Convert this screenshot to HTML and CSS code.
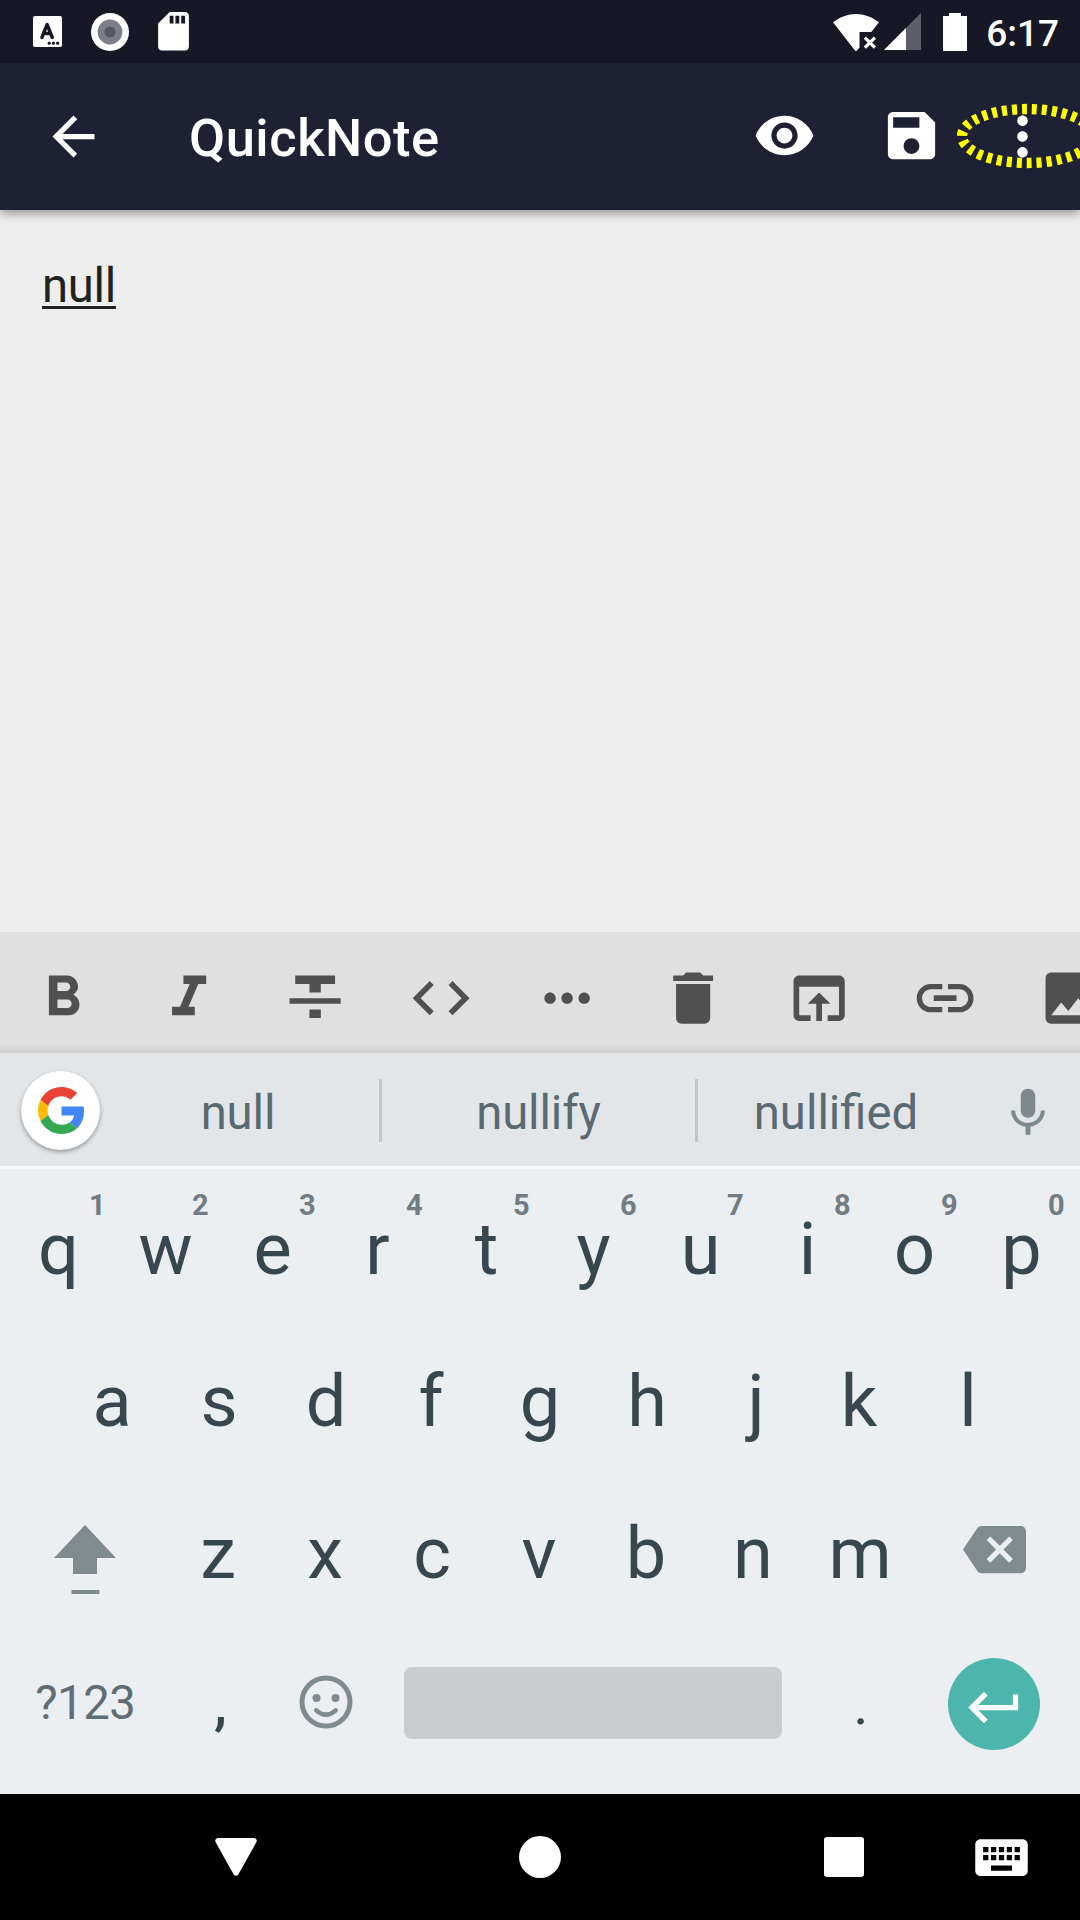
FILE: index.html
```html
<!DOCTYPE html>
<html lang="en">
<head>
<meta charset="utf-8">
<title>QuickNote</title>
<link rel="stylesheet" href="styles.css">
</head>
<body>
<div class="screen">
  <header class="status">
    <div class="status-left">
      <svg width="29" height="31" viewBox="0 0 29 31"><rect width="29" height="31" rx="2" fill="#fff"/><path d="M8.9 21.5 14.1 8.5 19.3 21.5M11 17.5h6.4" fill="none" stroke="#171826" stroke-width="3.4" stroke-linecap="round" stroke-linejoin="round"/><g fill="#171826"><circle cx="16.2" cy="27.2" r="1.6"/><circle cx="20.4" cy="27.2" r="1.6"/><circle cx="24.6" cy="27.2" r="1.6"/></g></svg>
      <svg width="38" height="38" viewBox="0 0 38 38"><circle cx="19" cy="19" r="19" fill="#fff"/><circle cx="19" cy="19" r="12.4" fill="#7b7d88"/><circle cx="19" cy="19" r="5.6" fill="#555662"/></svg>
      <svg width="31" height="38.5" viewBox="4 2 16 20"><path fill="#fff" d="M18 2h-8L4 8v12c0 1.1.9 2 2 2h12c1.1 0 2-.9 2-2V4c0-1.1-.9-2-2-2zm-6 6h-2V4h2v4zm3 0h-2V4h2v4zm3 0h-2V4h2v4z"/></svg>
    </div>
    <div class="status-right">
      <svg width="89" height="38" viewBox="833 12 89 38"><path fill="#fff" d="M833 21.3C840 16 848 13 856 13s16 3 23 8.300L871.300 31H859.500V46.500L857 49.500Q856 50.500 855 49.500Z"/><path d="m864.900 36.700 10 10m0-10-10 10" stroke="#fff" stroke-width="3.200"/><path fill="#5d5e69" d="M921 12v37h-37z"/><path fill="#fff" d="M906 27v22h-22z"/></svg>
      <svg class="battery" width="24" height="38" viewBox="0 0 24 38"><path fill="#fff" d="M6 0h12v3h6v35H0V3h6z"/></svg>
      <span class="clock">6:17</span>
    </div>
  </header>

  <div class="appbar">
    <svg class="icon back" viewBox="0 0 24 24"><path d="M20 11H7.830l5.590-5.590L12 4l-8 8 8 8 1.410-1.410L7.830 13H20v-2z"/></svg>
    <h1 class="title">QuickNote</h1>
    <div class="actions">
      <svg class="icon view" viewBox="0 0 24 24"><path d="M12 4.500C7 4.500 2.730 7.610 1 12c1.730 4.390 6 7.500 11 7.500s9.270-3.110 11-7.500c-1.730-4.390-6-7.500-11-7.500zM12 17c-2.760 0-5-2.240-5-5s2.240-5 5-5 5 2.240 5 5-2.240 5-5 5zm0-8c-1.660 0-3 1.340-3 3s1.340 3 3 3 3-1.340 3-3-1.340-3-3-3z"/></svg>
      <svg class="icon save" viewBox="0 0 24 24"><path d="M17 3H5c-1.110 0-2 .9-2 2v14c0 1.100.89 2 2 2h14c1.100 0 2-.9 2-2V7l-4-4zm-5 16c-1.660 0-3-1.340-3-3s1.340-3 3-3 3 1.340 3 3-1.340 3-3 3zm3-10H5V5h10v4z"/></svg>
      <div class="more">
        <svg class="icon" viewBox="0 0 24 24"><path d="M12 8c1.100 0 2-.9 2-2s-.9-2-2-2-2 .9-2 2 .9 2 2 2zm0 2c-1.100 0-2 .9-2 2s.9 2 2 2 2-.9 2-2-.9-2-2-2zm0 6c-1.100 0-2 .9-2 2s.9 2 2 2 2-.9 2-2-.9-2-2-2z"/></svg>
        <svg class="marker" width="123" height="66" viewBox="957 103 123 66"><ellipse cx="1027.500" cy="136" rx="65.500" ry="27" fill="none" stroke="#ff0" stroke-width="10.300" stroke-dasharray="5 5" stroke-dashoffset="-1.500"/></svg>
      </div>
    </div>
  </div>

  <main class="editor"><u class="note">null</u></main>

  <div class="tools">
    <svg viewBox="0 0 24 24"><path d="M15.600 10.790c.97-.67 1.650-1.770 1.650-2.790 0-2.260-1.750-4-4-4H7v14h7.040c2.090 0 3.710-1.700 3.710-3.790 0-1.520-.86-2.820-2.150-3.420zM10 6.500h3c.83 0 1.500.67 1.500 1.500s-.67 1.500-1.500 1.500h-3v-3zm3.500 9H10v-3h3.500c.83 0 1.500.67 1.500 1.500s-.67 1.500-1.500 1.500z"/></svg>
    <svg viewBox="0 0 24 24"><path d="M10 4v3h2.210l-3.420 8H6v3h8v-3h-2.210l3.420-8H18V4z"/></svg>
    <svg viewBox="0 0 24 24"><path d="M10 19h4v-3h-4v3zM5 4v3h5v3h4V7h5V4H5zM3 14h18v-2H3v2z"/></svg>
    <svg viewBox="0 0 24 24"><path d="M9.400 16.600 4.800 12l4.600-4.600L8 6l-6 6 6 6 1.400-1.400zm5.200 0 4.600-4.600-4.600-4.600L16 6l6 6-6 6-1.400-1.400z"/></svg>
    <svg viewBox="0 0 24 24"><path d="M6 10c-1.100 0-2 .9-2 2s.9 2 2 2 2-.9 2-2-.9-2-2-2zm12 0c-1.100 0-2 .9-2 2s.9 2 2 2 2-.9 2-2-.9-2-2-2zm-6 0c-1.100 0-2 .9-2 2s.9 2 2 2 2-.9 2-2-.9-2-2-2z"/></svg>
    <svg viewBox="0 0 24 24"><path d="M6 19c0 1.100.9 2 2 2h8c1.100 0 2-.9 2-2V7H6v12zM19 4h-3.500l-1-1h-5l-1 1H5v2h14V4z"/></svg>
    <svg viewBox="0 0 24 24"><path d="M19 4H5c-1.110 0-2 .9-2 2v12c0 1.100.89 2 2 2h4v-2H5V8h14v10h-4v2h4c1.100 0 2-.9 2-2V6c0-1.100-.89-2-2-2zm-7 6-4 4h3v6h2v-6h3l-4-4z"/></svg>
    <svg viewBox="0 0 24 24"><path d="M3.900 12c0-1.710 1.390-3.100 3.100-3.100h4V7H7c-2.760 0-5 2.240-5 5s2.240 5 5 5h4v-1.900H7c-1.710 0-3.100-1.390-3.100-3.100zM8 13h8v-2H8v2zm9-6h-4v1.900h4c1.710 0 3.100 1.390 3.100 3.100s-1.390 3.100-3.100 3.100h-4V17h4c2.760 0 5-2.240 5-5s-2.240-5-5-5z"/></svg>
    <svg viewBox="0 0 24 24"><path d="M21 19V5c0-1.100-.9-2-2-2H5c-1.100 0-2 .9-2 2v14c0 1.100.9 2 2 2h14c1.100 0 2-.9 2-2zM8.500 13.500l2.500 3.010L14.500 12l4.500 6H5l3.500-4.500z"/></svg>
  </div>

  <div class="suggestions">
    <div class="google"><svg width="47" height="47" viewBox="0.500 0 47 48"><path fill="#EA4335" d="M24 9.500c3.540 0 6.710 1.220 9.210 3.600l6.850-6.850C35.900 2.380 30.470 0 24 0 14.620 0 6.510 5.380 2.560 13.220l7.980 6.190C12.430 13.720 17.740 9.500 24 9.500z"/><path fill="#4285F4" d="M46.980 24.550c0-1.570-.15-3.090-.38-4.550H24v9.020h12.940c-.58 2.960-2.260 5.480-4.780 7.180l7.730 6c4.510-4.180 7.090-10.360 7.090-17.650z"/><path fill="#FBBC05" d="M10.530 28.590c-.48-1.450-.76-2.990-.76-4.590s.27-3.140.76-4.590l-7.980-6.190C.92 16.460 0 20.120 0 24c0 3.880.92 7.540 2.560 10.780l7.970-6.190z"/><path fill="#34A853" d="M24 48c6.480 0 11.930-2.130 15.890-5.810l-7.730-6c-2.150 1.450-4.920 2.300-8.160 2.300-6.260 0-11.570-4.220-13.470-9.910l-7.980 6.190C6.510 42.620 14.620 48 24 48z"/></svg></div>
    <span class="word first">null</span>
    <span class="word middle">nullify</span>
    <span class="word last">nullified</span>
    <svg class="mic" viewBox="0 0 24 24"><path d="M12 14c1.660 0 3-1.340 3-3V5c0-1.660-1.340-3-3-3S9 3.340 9 5v6c0 1.660 1.340 3 3 3zm5.300-3c0 3-2.540 5.100-5.300 5.100S6.700 14 6.700 11H5c0 3.410 2.720 6.230 6 6.720V21h2v-3.280c3.280-.48 6-3.300 6-6.720h-1.700z"/></svg>
  </div>

  <div class="keyboard">
    <div class="row">
      <span class="key">q<sup class="one">1</sup></span><span class="key">w<sup>2</sup></span><span class="key">e<sup>3</sup></span><span class="key"><span class="nudge-left">r</span><sup>4</sup></span><span class="key">t<sup>5</sup></span><span class="key">y<sup>6</sup></span><span class="key">u<sup>7</sup></span><span class="key">i<sup>8</sup></span><span class="key">o<sup>9</sup></span><span class="key">p<sup>0</sup></span>
    </div>
    <div class="row">
      <span class="key">a</span><span class="key">s</span><span class="key">d</span><span class="key"><span class="nudge-left">f</span></span><span class="key">g</span><span class="key">h</span><span class="key"><span class="nudge-right">j</span></span><span class="key"><span class="nudge-left">k</span></span><span class="key">l</span>
    </div>
    <div class="row letters">
      <span class="key wide"><svg class="shift" width="62" height="69" viewBox="0 0 62 69"><path d="M31 0 62 33H43v16H19V33H0zM17.500 65h28v4h-28z"/></svg></span>
      <span class="key">z</span><span class="key">x</span><span class="key">c</span><span class="key">v</span><span class="key">b</span><span class="key">n</span><span class="key">m</span>
      <span class="key wide"><svg class="erase" width="63" height="63" viewBox="0 0 24 24"><path d="M22 3H7c-.69 0-1.230.35-1.590.88L0 12l5.410 8.110c.36.53.9.89 1.590.89h15c1.100 0 2-.9 2-2V5c0-1.100-.9-2-2-2zm-3 12.590L17.590 17 14 13.410 10.410 17 9 15.590 12.590 12 9 8.410 10.410 7 14 10.590 17.590 7 19 8.410 15.410 12 19 15.590z"/></svg></span>
    </div>
    <div class="row bottom">
      <span class="key wide symbols">?123</span>
      <span class="key punct comma">,</span>
      <span class="key"><svg class="emoji" width="54" height="54" viewBox="0 0 54 54"><circle cx="27" cy="27" r="24" fill="none" stroke="#808b90" stroke-width="5"/><circle cx="17.500" cy="23" r="4"/><circle cx="36.500" cy="23" r="4"/><path d="M17.300 35.300q9.700 8.800 19.400 0" fill="none" stroke="#808b90" stroke-width="4.500" stroke-linecap="round"/></svg></span>
      <span class="space"></span>
      <span class="key punct">.</span>
      <span class="key wide"><span class="enter"><svg width="63" height="63" viewBox="0 0 24 24"><path d="M19 7v4H5.830l3.580-3.590L8 6l-6 6 6 6 1.410-1.410L5.830 13H21V7z"/></svg></span></span>
    </div>
  </div>

  <nav class="nav">
    <svg width="42" height="38" viewBox="0 0 42 38"><path fill="#fff" d="M2.500 0h37q3 .8 2 4L23.300 36.500q-2.300 2.500-4.600 0L.5 4q-1-3.200 2-4z"/></svg>
    <svg width="42" height="42" viewBox="0 0 42 42"><circle cx="21" cy="21" r="21" fill="#fff"/></svg>
    <svg width="40" height="40" viewBox="0 0 40 40"><rect width="40" height="40" rx="3" fill="#fff"/></svg>
    <svg width="63" height="63" viewBox="0 0 24 24"><path fill="#fff" d="M20 5H4c-1.100 0-1.990.9-1.990 2L2 17c0 1.100.9 2 2 2h16c1.100 0 2-.9 2-2V7c0-1.100-.9-2-2-2zm-9 3h2v2h-2V8zm0 3h2v2h-2v-2zM8 8h2v2H8V8zm0 3h2v2H8v-2zm-1 2H5v-2h2v2zm0-3H5V8h2v2zm9 7H8v-2h8v2zm0-4h-2v-2h2v2zm0-3h-2V8h2v2zm3 3h-2v-2h2v2zm0-3h-2V8h2v2z"/></svg>
  </nav>
</div>
</body>
</html>
```

FILE: styles.css
```css
* { box-sizing: border-box; }

body {
  margin: 0;
  font-family: Roboto, "Noto Sans", sans-serif;
}

svg { display: block; flex: none; }

.screen {
  width: 1080px;
  height: 1920px;
  display: flex;
  flex-direction: column;
  overflow: hidden;
  background: #eeeeee;
}

.status {
  height: 63px;
  flex: none;
  display: flex;
  justify-content: space-between;
  align-items: center;
  padding: 0 21px 0 33px;
  background: #171826;
  color: #fff;
}

.status-left, .status-right { display: flex; align-items: center; }
.status-left { gap: 29px; }
.battery { margin-left: 21px; }

.clock {
  margin-left: 19px;
  padding-top: 4px;
  font-size: 37px;
  font-weight: 500;
  line-height: 44px;
}

.appbar {
  height: 147px;
  flex: none;
  display: flex;
  align-items: center;
  padding: 0 26px 0 42px;
  background: #1e2034;
  color: #fff;
  box-shadow: 0 3px 10px rgba(0, 0, 0, .4);
  z-index: 1;
}

.icon { width: 63px; height: 63px; fill: currentColor; }

.title {
  margin: 0 0 0 84px;
  padding-top: 3px;
  font-size: 52.5px;
  font-weight: 500;
  line-height: 62px;
  letter-spacing: .5px;
}

.actions { display: flex; margin-left: auto; }
.view { margin-top: -1px; }
.save { margin: -1px 48px 0 64px; }
.more { position: relative; }
.marker { position: absolute; left: -34px; top: -2px; }

.editor {
  flex: 1;
  padding: 48px 42px;
}

.note {
  font-size: 47.25px;
  line-height: 56px;
  letter-spacing: -.3px;
  color: #212121;
  text-decoration: underline;
  text-decoration-thickness: 3px;
  text-underline-offset: 4px;
}

.tools {
  height: 121px;
  flex: none;
  display: grid;
  grid-template-columns: repeat(9, 126px);
  justify-items: center;
  padding-top: 32px;
  overflow: hidden;
  background: linear-gradient(to top, #cfcfcf, #e0e0e0 9px);
}

.tools svg { width: 68.25px; height: 68.25px; fill: #505050; }

.suggestions {
  height: 116px;
  flex: none;
  display: flex;
  align-items: center;
  padding-top: 2px;
  border-bottom: 3px solid #f5f7f9;
  background: #e2e6e9;
  color: #5a6a72;
}

.google {
  width: 79px;
  height: 79px;
  margin-left: 21px;
  display: flex;
  align-items: center;
  justify-content: center;
  padding-left: 1px;
  border-radius: 50%;
  background: #fff;
  box-shadow: 0 2px 4px rgba(0, 0, 0, .35);
}

.word {
  height: 63px;
  display: flex;
  align-items: center;
  justify-content: center;
  padding-top: 5px;
  font-size: 47.25px;
  letter-spacing: -.1px;
  font-variant-ligatures: common-ligatures;
}

.first { width: 282px; padding-right: 3px; border-right: 3px solid #c1c6ca; }
.middle { width: 316px; border-right: 3px solid #c1c6ca; }
.last { width: 276px; letter-spacing: 0; }
.mic { width: 58px; height: 58px; margin: 5px 0 0 25px; fill: #7e898e; }

.keyboard {
  height: 625px;
  flex: none;
  padding-top: 3px;
  background: #ebeff2;
  color: #37474f;
}

.row {
  height: 152px;
  display: flex;
  justify-content: center;
}

.key {
  width: 107px;
  display: flex;
  align-items: center;
  justify-content: center;
  position: relative;
  padding-top: 2px;
  font-size: 72px;
}

.key svg { fill: #808b90; }
.key.wide { width: 160.5px; padding-top: 0; }
.letters .key:not(.wide) { padding-right: 2px; }
.nudge-left { margin-right: 4px; }
.nudge-right { margin-left: 4px; }

.key sup {
  position: absolute;
  left: 80px;
  top: 16px;
  font-size: 29px;
  font-weight: 700;
  line-height: 34px;
  color: #717d83;
}

.key .one { left: 84px; }

.shift { margin-top: 15px; }
.erase { margin-bottom: 5px; }
.emoji { margin: 0 1px 7px 0; }
.key.symbols { font-size: 47.25px; letter-spacing: -.5px; color: #5f6d74; padding-bottom: 2px; }
.key.punct { font-size: 58px; padding-top: 0; }
.key.comma { padding-left: 3px; font-weight: 500; }

.space {
  width: 378px;
  height: 72px;
  margin: 39px 26px 0 24px;
  border-radius: 8px;
  background: #c9cdd0;
}

.enter {
  width: 92px;
  height: 92px;
  display: flex;
  align-items: center;
  justify-content: center;
  margin-right: 2px;
  padding: 6px 0 0 1px;
  border-radius: 50%;
  background: #4db6ac;
}

.enter svg { fill: #fff; }

.nav {
  height: 126px;
  flex: none;
  display: flex;
  align-items: center;
  padding-left: 215px;
  background: #000;
}

.nav svg:nth-child(2) { margin-left: 262px; }
.nav svg:nth-child(3) { margin-left: 263px; }
.nav svg:nth-child(4) { margin-left: 106px; }
```
